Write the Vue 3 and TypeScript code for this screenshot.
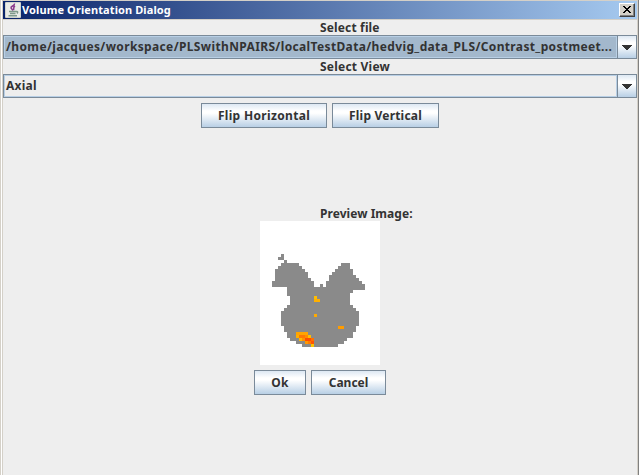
<script setup lang="ts">
type Run = [row: number, from: number, to: number, color?: string]

const GREY = '#8a8a8a'

// Slice voxels: row, first column, last column (inclusive), colour
const runs: Run[] = [
  [11, 7, 7], [12, 6, 7], [13, 8, 8],
  [14, 7, 12], [14, 27, 29],
  [15, 6, 13], [15, 26, 29],
  [16, 5, 14], [16, 25, 30],
  [17, 5, 15], [17, 24, 30],
  [18, 5, 15], [18, 23, 31],
  [19, 5, 16], [19, 23, 32],
  [20, 4, 17], [20, 22, 33],
  [21, 4, 17], [21, 20, 20], [21, 22, 34],
  [22, 9, 34], [23, 9, 30], [24, 9, 29],
  [25, 10, 29], [26, 10, 29], [27, 10, 29],
  [28, 9, 30], [29, 8, 31],
  [30, 7, 32], [31, 7, 32], [32, 7, 32], [33, 7, 32], [34, 7, 32],
  [35, 8, 31], [36, 8, 31], [37, 9, 30], [38, 9, 30],
  [39, 10, 28], [40, 12, 27], [41, 14, 25],
  [25, 18, 18, '#ffbe00'], [26, 18, 19, '#ffb000'], [31, 18, 18, '#ffaa00'],
  [35, 26, 27, '#ff9c00'],
  [37, 12, 15, '#ffa400'],
  [38, 12, 12, '#ffae00'], [38, 13, 14, '#ff7800'], [38, 15, 15, '#ff8c00'], [38, 16, 16, '#ffc000'],
  [39, 13, 13, '#ffb800'], [39, 14, 14, '#ff9000'], [39, 15, 16, '#ff4c00'], [39, 17, 17, '#ff7000'],
  [40, 15, 15, '#ff9800'], [40, 16, 16, '#ff7c00'], [40, 17, 17, '#ff5400'],
  [41, 17, 17, '#ffc400'],
]

const selectedFile = '/home/jacques/workspace/PLSwithNPAIRS/localTestData/hedvig_data_PLS/Contrast_postmeet...'
const selectedView = 'Axial'
</script>

<template>
  <div class="window">
    <header class="title-bar">
      <svg class="java" width="16" height="16" viewBox="0 0 16 16">
        <rect width="16" height="16" rx="1" fill="#d0d3cf" />
        <rect x="1" y="1" width="14" height="14" fill="#e9ebe6" />
        <path d="M9.500 1.500C10 4 5.500 4 6 6L8 8.500M10 4C7.500 5.500 9.500 6 8.500 8" fill="none" stroke="#8a3a8c" stroke-width="1.500" />
        <path d="M4 9.500h7.500M5 11.500h5.500M3.500 13.800h8.500M11.500 9.500q2 0 .5 2" fill="none" stroke="#7f9a8b" stroke-width="1.500" />
      </svg>
      <h1 class="title">Volume Orientation Dialog</h1>
      <button class="close" aria-label="Close">
        <svg width="8" height="7" viewBox="0 0 8 7" shape-rendering="crispEdges">
          <path d="M0 0h2v1h1v1h2v-1h1v-1h2v1h-1v1h-1v1h-1v1h1v1h1v1h1v1h-2v-1h-1v-1h-2v1h-1v1h-2v-1h1v-1h1v-1h1v-1h-1v-1h-1v-1h-1z" fill="#000" />
        </svg>
      </button>
    </header>
    <main class="content">
      <div class="caption"><span class="t-file">Select file</span></div>
      <div class="combo focused">
        <div class="value"><span class="t-path">{{ selectedFile }}</span></div>
        <div class="arrow"><svg width="10" height="5" viewBox="0 0 10 5" shape-rendering="crispEdges"><path d="M0 0h10v1h-1v1h-1v1h-1v1h-1v1h-2v-1h-1v-1h-1v-1h-1v-1h-1z" fill="#333" /></svg></div>
      </div>
      <div class="caption"><span class="t-view">Select View</span></div>
      <div class="combo">
        <div class="value"><span class="t-axial">{{ selectedView }}</span></div>
        <div class="arrow"><svg width="10" height="5" viewBox="0 0 10 5" shape-rendering="crispEdges"><path d="M0 0h10v1h-1v1h-1v1h-1v1h-1v1h-2v-1h-1v-1h-1v-1h-1v-1h-1z" fill="#333" /></svg></div>
      </div>
      <div class="buttons">
        <button class="btn horizontal"><span>Flip Horizontal</span></button>
        <button class="btn vertical"><span>Flip Vertical</span></button>
      </div>
      <div class="caption preview-caption"><span class="t-preview">Preview Image:</span></div>
      <svg class="preview" width="120" height="144" viewBox="0 0 40 48" shape-rendering="crispEdges">
        <rect width="40" height="48" fill="#fff" />
        <rect
          v-for="(r, i) in runs"
          :key="i"
          :x="r[1]"
          :y="r[0]"
          :width="r[2] - r[1] + 1"
          height="1"
          :fill="r[3] ?? GREY"
        />
      </svg>
      <div class="buttons answer">
        <button class="btn ok"><span>Ok</span></button>
        <button class="btn cancel"><span>Cancel</span></button>
      </div>
    </main>
  </div>
</template>

<style>
html, body { margin: 0; overflow: hidden; background: #eee; }
</style>

<style scoped>
.window {
  box-sizing: border-box;
  width: 639px;
  height: 475px;
  padding: 1px 1px 0 3px;
  background: linear-gradient(90deg, #d4d0c8 1px, #fff 1px 2px, #d4d0c8 2px 638px, #808080 638px);
  font: bold 12px/15px "Noto Sans", "Open Sans", sans-serif;
  color: #333;
  overflow: hidden;
}
.title-bar {
  display: flex;
  align-items: center;
  width: 634px;
  height: 18px;
  background: linear-gradient(90deg, #0a246a, #a6caf0);
}
.java { margin-left: 2px; flex: none; }
.title {
  flex: 1;
  margin: 0 0 0 1px;
  font: bold 11px/18px "Noto Sans", sans-serif;
  letter-spacing: 0.1px;
  color: #fff;
  white-space: nowrap;
}
.close {
  box-sizing: border-box;
  display: flex;
  align-items: center;
  justify-content: center;
  width: 16px;
  height: 14px;
  margin-right: 2px;
  padding: 0 1px 1px 0;
  border: 1px solid;
  border-color: #fff #404040 #404040 #fff;
  background: #d4d0c8;
  box-shadow: inset -1px -1px #808080;
}
.content {
  display: flex;
  flex-direction: column;
  width: 634px;
  height: 455px;
  margin-top: 1px;
  background: #eee;
}
.caption { height: 15px; padding-left: 317px; white-space: nowrap; }
.combo {
  box-sizing: border-box;
  display: flex;
  height: 24px;
  border: 1px solid #7a8a99;
}
.value {
  box-sizing: border-box;
  flex: 1;
  min-width: 0;
  border: 1px solid #b8cfe5;
  padding-left: 1px;
  line-height: 19px;
  white-space: nowrap;
  overflow: hidden;
}
.focused .value { background: #a3b8cc; }
.arrow {
  display: flex;
  align-items: flex-start;
  justify-content: center;
  width: 18px;
  border-left: 1px solid #7a8a99;
  background: linear-gradient(#dde8f3, #fff 30% 40%, #b8cfe5);
}
.arrow svg { margin-top: 9px; }
.buttons { display: flex; gap: 5px; padding: 5px 0 0 198px; }
.answer { padding-left: 251px; }
.btn {
  box-sizing: border-box;
  height: 25px;
  padding: 0;
  border: 1px solid #7a8a99;
  background: linear-gradient(#dde8f3, #fff 30% 40%, #b8cfe5);
  font: inherit;
  line-height: 22px;
  color: #333;
  white-space: nowrap;
}
.horizontal { width: 126px; letter-spacing: 0.33px; }
.vertical { width: 107px; letter-spacing: 0.2px; }
.ok { width: 52px; letter-spacing: 0.4px; }
.cancel { width: 75px; }
.preview-caption { margin-top: 78px; }
.preview { display: block; margin-left: 257px; flex: none; }
.t-file { letter-spacing: 0.15px; }
.t-view { letter-spacing: 0.22px; }
.t-axial { letter-spacing: 0.25px; }
.t-preview { letter-spacing: 0.05px; }
.t-path { letter-spacing: 0.36px; }
</style>
